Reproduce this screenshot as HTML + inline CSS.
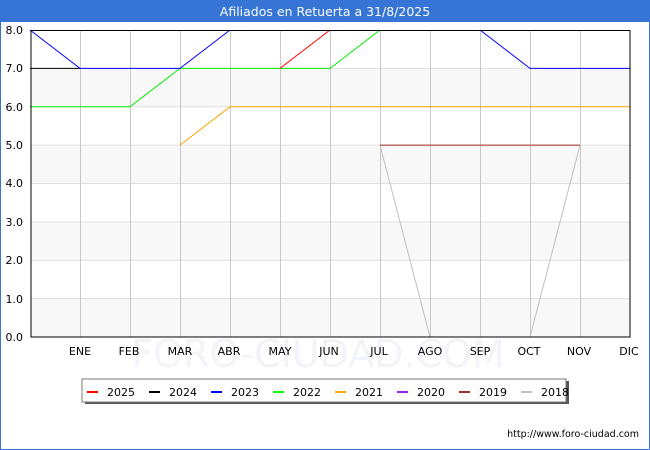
<!DOCTYPE html>
<html><head><meta charset="utf-8"><style>
body{margin:0;width:650px;height:450px;overflow:hidden;background:#fff;font-family:"DejaVu Sans","Liberation Sans",sans-serif}
</style></head><body>
<svg width="650" height="450" xmlns="http://www.w3.org/2000/svg" style="position:absolute;left:0;top:0">
<rect x="0.5" y="0.5" width="649" height="449" fill="#fff" stroke="#3674d6"/>
<rect x="0" y="0" width="650" height="22" fill="#3674d6"/>
<text x="325" y="16" font-size="12.5" fill="#fff" text-anchor="middle">Afiliados en Retuerta a 31/8/2025</text>
<g fill="#f8f8f8">
<rect x="31" y="68.4" width="599" height="38.4"/>
<rect x="31" y="145.1" width="599" height="38.4"/>
<rect x="31" y="221.9" width="599" height="38.4"/>
<rect x="31" y="298.6" width="599" height="38.4"/>
</g>
<g stroke="#e0e0e0" stroke-width="1">
<line x1="31" y1="68.4" x2="630" y2="68.4"/><line x1="31" y1="106.8" x2="630" y2="106.8"/>
<line x1="31" y1="145.1" x2="630" y2="145.1"/><line x1="31" y1="183.5" x2="630" y2="183.5"/>
<line x1="31" y1="221.9" x2="630" y2="221.9"/><line x1="31" y1="260.3" x2="630" y2="260.3"/>
<line x1="31" y1="298.6" x2="630" y2="298.6"/>
</g>
<g stroke="#c8c8c8" stroke-width="1">
<line x1="80.5" y1="30" x2="80.5" y2="337"/><line x1="130.5" y1="30" x2="130.5" y2="337"/>
<line x1="180.5" y1="30" x2="180.5" y2="337"/><line x1="230.5" y1="30" x2="230.5" y2="337"/>
<line x1="280.5" y1="30" x2="280.5" y2="337"/><line x1="330.5" y1="30" x2="330.5" y2="337"/>
<line x1="380.5" y1="30" x2="380.5" y2="337"/><line x1="430.5" y1="30" x2="430.5" y2="337"/>
<line x1="480.5" y1="30" x2="480.5" y2="337"/><line x1="530.5" y1="30" x2="530.5" y2="337"/>
<line x1="580.5" y1="30" x2="580.5" y2="337"/>
</g>
<text x="318" y="367" font-size="38" fill="#eeeef8" text-anchor="middle" opacity="0.7">FORO-CIUDAD.COM</text>
<g fill="none" stroke-width="1">
<polyline stroke="#c0c0c0" points="380,145.1 430,337"/>
<polyline stroke="#c0c0c0" points="530,337 580,145.1"/>
<polyline stroke="#a52a2a" points="380,145.1 580,145.1"/>
<polyline stroke="#ffa500" points="180,145.1 230,106.8 630,106.8"/>
<polyline stroke="#00ee00" points="30,106.8 130,106.8 180,68.4 330,68.4 380,30"/>
<polyline stroke="#000" points="30,68.4 80,68.4"/>
<polyline stroke="#0000ff" points="30,30 80,68.4 180,68.4 230,30"/>
<polyline stroke="#0000ff" points="480,30 530,68.4 630,68.4"/>
<polyline stroke="#ff0000" points="280,68.4 330,30"/>
</g>
<rect x="31" y="30.5" width="599" height="306.5" fill="none" stroke="#000" stroke-width="1"/>
<g font-size="11" fill="#000" text-anchor="end">
<text x="23" y="34">8.0</text><text x="23" y="72">7.0</text><text x="23" y="111">6.0</text>
<text x="23" y="149">5.0</text><text x="23" y="187">4.0</text><text x="23" y="226">3.0</text>
<text x="23" y="264">2.0</text><text x="23" y="303">1.0</text><text x="23" y="341">0.0</text>
</g>
<g font-size="11" fill="#000" text-anchor="middle">
<text x="80" y="355">ENE</text><text x="129" y="355">FEB</text><text x="180" y="355">MAR</text>
<text x="229" y="355">ABR</text><text x="280" y="355">MAY</text><text x="329" y="355">JUN</text>
<text x="379" y="355">JUL</text><text x="430" y="355">AGO</text><text x="480" y="355">SEP</text>
<text x="529" y="355">OCT</text><text x="579" y="355">NOV</text><text x="629" y="355">DIC</text>
</g>
<rect x="85" y="381" width="484" height="23" fill="#555"/>
<rect x="82" y="379" width="484" height="23" fill="#fff" stroke="#777"/>
<g stroke-width="2">
<line x1="87" y1="392" x2="98" y2="392" stroke="#f00"/>
<line x1="149" y1="392" x2="160" y2="392" stroke="#000"/>
<line x1="211" y1="392" x2="222" y2="392" stroke="#00f"/>
<line x1="273" y1="392" x2="284" y2="392" stroke="#0f0"/>
<line x1="335" y1="392" x2="346" y2="392" stroke="#ffa500"/>
<line x1="397" y1="392" x2="408" y2="392" stroke="#a020f0"/>
<line x1="459" y1="392" x2="470" y2="392" stroke="#a52a2a"/>
<line x1="521" y1="392" x2="532" y2="392" stroke="#c0c0c0"/>
</g>
<g font-size="11" fill="#000">
<text x="107" y="396">2025</text><text x="169" y="396">2024</text><text x="231" y="396">2023</text>
<text x="293" y="396">2022</text><text x="355" y="396">2021</text><text x="417" y="396">2020</text>
<text x="479" y="396">2019</text><text x="541" y="396">2018</text>
</g>
<text x="639" y="437" font-size="9.5" fill="#000" text-anchor="end">http://www.foro-ciudad.com</text>
</svg>
</body></html>
